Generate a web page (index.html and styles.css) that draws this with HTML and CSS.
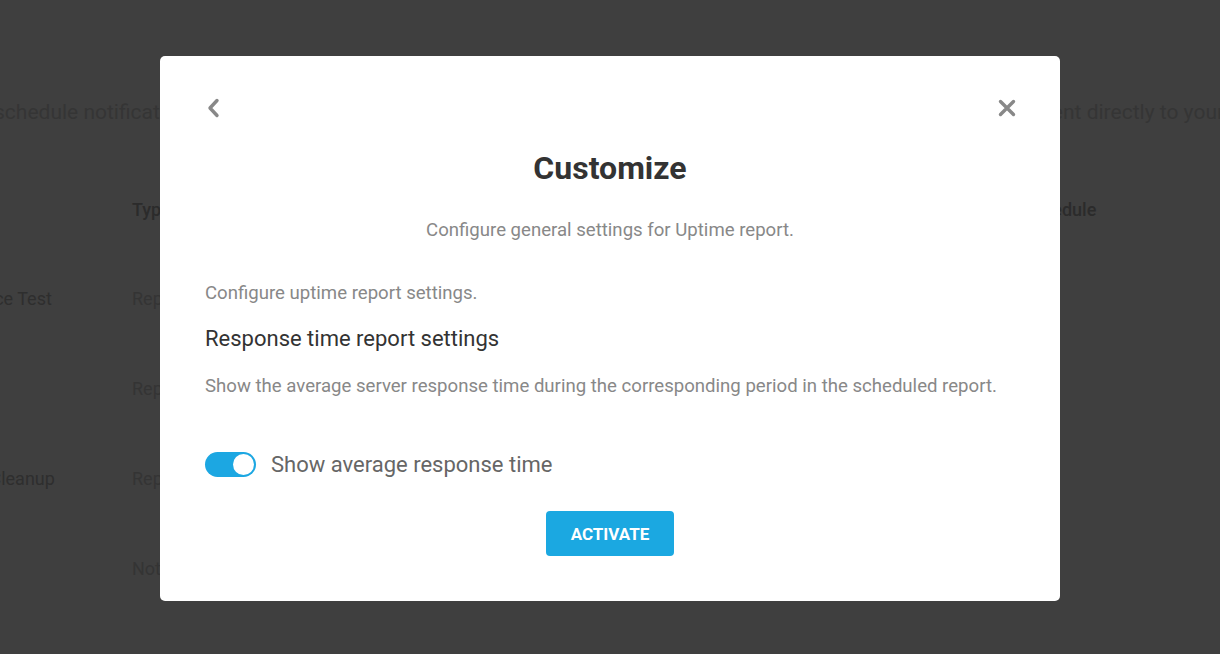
FILE: index.html
```html
<!DOCTYPE html>
<html lang="en">
<head>
    <meta charset="UTF-8">
    <meta name="viewport" content="width=device-width, initial-scale=1.0">
    <title>Reports</title>
    <link rel="stylesheet" href="styles.css">
</head>
<body>
    <!-- Page behind the dialog -->
    <div class="page">
        <div class="intro">
            <span class="intro-left">schedule notifications for your monitored sites and get every summary</span>
            <span class="intro-right">sent directly to your inbox.</span>
        </div>

        <div class="table">
            <div class="row head">
                <span class="col-name">Name</span>
                <span class="col-type">Type</span>
                <span class="col-sched">Schedule</span>
            </div>
            <div class="row">
                <span class="col-name">Performance Test</span>
                <span class="col-type">Report</span>
            </div>
            <div class="row">
                <span class="col-name">Uptime</span>
                <span class="col-type">Report</span>
            </div>
            <div class="row">
                <span class="col-name">Database Cleanup</span>
                <span class="col-type">Report</span>
            </div>
            <div class="row">
                <span class="col-name">SEO</span>
                <span class="col-type">Notification</span>
            </div>
        </div>
    </div>

    <!-- Customize dialog -->
    <div class="overlay">
        <div class="modal">
            <div class="modal-top">
                <button class="icon-btn" aria-label="Back">
                    <svg width="16" height="20" viewBox="0 0 16 20">
                        <polyline points="12,2.5 5,10 12,17.5" fill="none" stroke="#888" stroke-width="3.4" stroke-linecap="round" stroke-linejoin="round"/>
                    </svg>
                </button>
                <button class="icon-btn close" aria-label="Close">
                    <svg width="18" height="18" viewBox="0 0 18 18">
                        <path d="M2.5 2.5 L15.5 15.5 M15.5 2.5 L2.5 15.5" stroke="#888" stroke-width="3.4" stroke-linecap="round"/>
                    </svg>
                </button>
            </div>

            <h1 class="modal-title">Customize</h1>
            <p class="modal-sub">Configure general settings for Uptime report.</p>

            <p class="note">Configure uptime report settings.</p>
            <h2 class="setting-title">Response time report settings</h2>
            <p class="note desc">Show the average server response time during the corresponding period in the scheduled report.</p>

            <label class="toggle-row">
                <span class="toggle"><span class="knob"></span></span>
                <span class="toggle-label">Show average response time</span>
            </label>

            <div class="actions">
                <button class="activate">Activate</button>
            </div>
        </div>
    </div>
</body>
</html>
```

FILE: styles.css
```css
body {
    margin: 0;
    padding: 0;
    font-family: 'Roboto', 'Liberation Sans', sans-serif;
    background-color: #3f3f3f;
    overflow: hidden;
    height: 654px;
}

/* background page */
.page {
    padding-top: 100px;
}

.intro {
    display: grid;
    grid-template-columns: 1047px auto;
    font-size: 21px;
    color: #353535;
    white-space: nowrap;
    margin-left: -6px;
}

.intro-left,
.intro-right {
    overflow: hidden;
}

.table {
    margin-top: 60px;
    margin-left: -91px;
}

.row {
    display: flex;
    align-items: center;
    height: 90px;
    font-size: 18px;
    color: #343434;
}

.row.head {
    height: 50px;
    font-weight: 500;
    color: #2b2b2b;
    margin-bottom: 19px;
}

.col-name {
    width: 223px;
    color: #2e2e2e;
}

.col-type {
    width: 890px;
}

.col-sched {
    white-space: nowrap;
}

/* dialog */
.overlay {
    position: fixed;
    top: 0;
    left: 0;
    right: 0;
    bottom: 0;
    display: flex;
    justify-content: center;
    align-items: flex-start;
    padding-top: 56px;
}

.modal {
    width: 900px;
    box-sizing: border-box;
    background-color: #fff;
    border-radius: 5px;
    padding: 40px 45px 45px;
}

.modal-top {
    display: flex;
    justify-content: space-between;
    align-items: center;
    height: 24px;
}

.icon-btn {
    background: none;
    border: none;
    padding: 0;
    cursor: pointer;
    display: flex;
}

.icon-btn.close {
    margin-right: -1px;
}

.modal-title {
    margin: 28px 0 0;
    text-align: center;
    font-size: 32px;
    line-height: 40px;
    font-weight: 700;
    color: #333;
}

.modal-sub {
    margin: 30px 0 0;
    text-align: center;
    font-size: 18.6px;
    line-height: 24px;
    color: #888;
}

.note {
    margin: 39px 0 0;
    font-size: 18.6px;
    line-height: 24px;
    color: #888;
}

.setting-title {
    margin: 20px 0 0;
    font-size: 22px;
    line-height: 28px;
    font-weight: 400;
    color: #333;
}

.note.desc {
    margin-top: 21px;
}

.toggle-row {
    display: flex;
    align-items: center;
    gap: 15px;
    margin-top: 53px;
    height: 26px;
    cursor: pointer;
}

.toggle {
    position: relative;
    width: 51px;
    height: 25px;
    border-radius: 13px;
    background-color: #1ca7e2;
}

.knob {
    position: absolute;
    top: 2px;
    right: 2px;
    width: 21px;
    height: 21px;
    border-radius: 50%;
    background-color: #fff;
}

.toggle-label {
    font-size: 22px;
    color: #666;
}

.actions {
    display: flex;
    justify-content: center;
    margin-top: 34px;
}

.activate {
    width: 128px;
    height: 45px;
    border: none;
    border-radius: 4px;
    background-color: #1ba8e1;
    color: #fff;
    font-family: inherit;
    font-size: 17px;
    font-weight: 700;
    text-transform: uppercase;
    cursor: pointer;
}
```
